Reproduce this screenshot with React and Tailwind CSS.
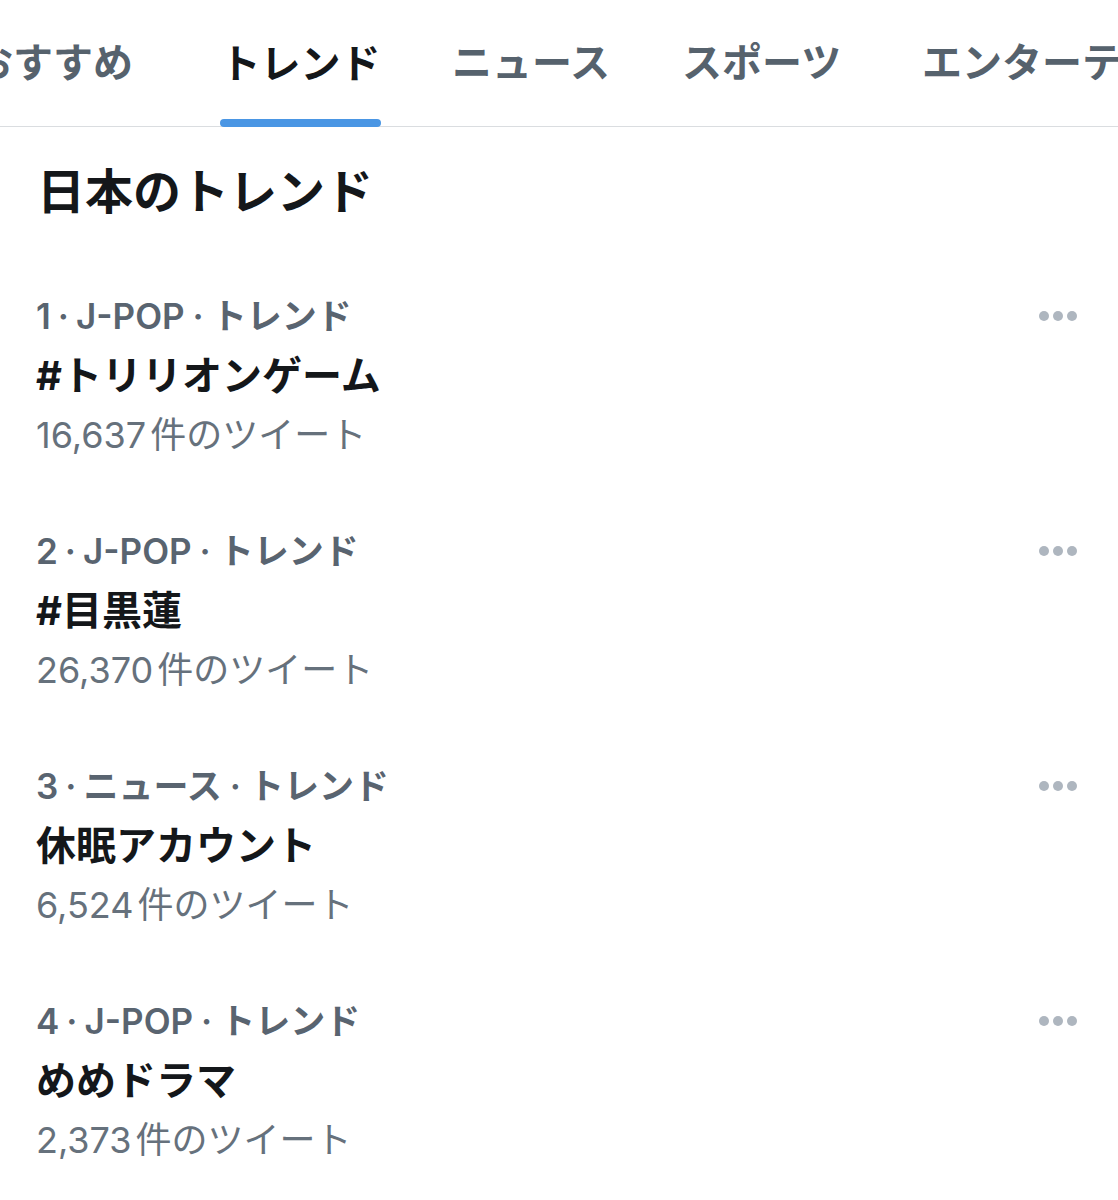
const trends = [
  { rank: 1, cat: "J-POP", title: "#トリリオンゲーム", count: "16,637" },
  { rank: 2, cat: "J-POP", title: "#目黒蓮", count: "26,370" },
  { rank: 3, cat: "ニュース", title: "休眠アカウント", count: "6,524" },
  { rank: 4, cat: "J-POP", title: "めめドラマ", count: "2,373" },
];

function Dots() {
  return (
    <div className="flex gap-[4px] mt-[15px]">
      <span className="w-[10px] h-[10px] rounded-full bg-[#aeb6bf]" />
      <span className="w-[10px] h-[10px] rounded-full bg-[#aeb6bf]" />
      <span className="w-[10px] h-[10px] rounded-full bg-[#aeb6bf]" />
    </div>
  );
}

function TrendItem({ rank, cat, title, count }) {
  return (
    <div className="h-[235px] flex justify-between pl-[36px] pr-[41px]">
      <div>
        <p className="h-[40px] leading-[40px] text-[35px] font-semibold text-[#596470]">
          {rank}
          <span className="mx-[7px]">·</span>
          {cat}
          <span className="mx-[8px]">·</span>
          トレンド
        </p>
        <p className="mt-[15px] h-[50px] leading-[50px] text-[40px] font-bold text-[#14171a]">
          {title}
        </p>
        <p className="mt-[11px] h-[46px] leading-[46px] text-[36px] text-[#66717c]">
          {count}
          <span className="ml-[4px]">件のツイート</span>
        </p>
      </div>
      <Dots />
    </div>
  );
}

export default function App() {
  const font = {
    fontFamily: '"Inter", "Noto Sans CJK JP", sans-serif',
  };
  return (
    <div
      className="w-[1118px] h-[1200px] bg-white overflow-hidden"
      style={font}
    >
      <div className="h-[127px] border-b border-[#dadde0] flex items-stretch whitespace-nowrap text-[40px]">
        <div className="ml-[-27px] w-[160px] shrink-0 flex items-center font-semibold text-[#56626d]">
          おすすめ
        </div>
        <div className="ml-[87px] w-[161px] shrink-0 flex flex-col items-center justify-end">
          <span className="h-[118px] pt-[8px] flex items-center font-bold text-[#14171a]">
            トレンド
          </span>
          <span className="w-[161px] h-[8px] rounded-full bg-[#4a96e4] mb-[-1px]" />
        </div>
        <div className="ml-[71px] w-[160px] shrink-0 flex items-center font-semibold text-[#56626d]">
          ニュース
        </div>
        <div className="ml-[70px] w-[160px] shrink-0 flex items-center font-semibold text-[#56626d]">
          スポーツ
        </div>
        <div className="ml-[80px] shrink-0 flex items-center font-semibold text-[#56626d]">
          エンターテインメント
        </div>
      </div>
      <h1 className="mt-[37px] mb-[76px] pl-[37px] h-[56px] leading-[56px] text-[48px] font-bold text-[#14171a]">
        日本のトレンド
      </h1>
      {trends.map((t) => (
        <TrendItem key={t.rank} {...t} />
      ))}
    </div>
  );
}
